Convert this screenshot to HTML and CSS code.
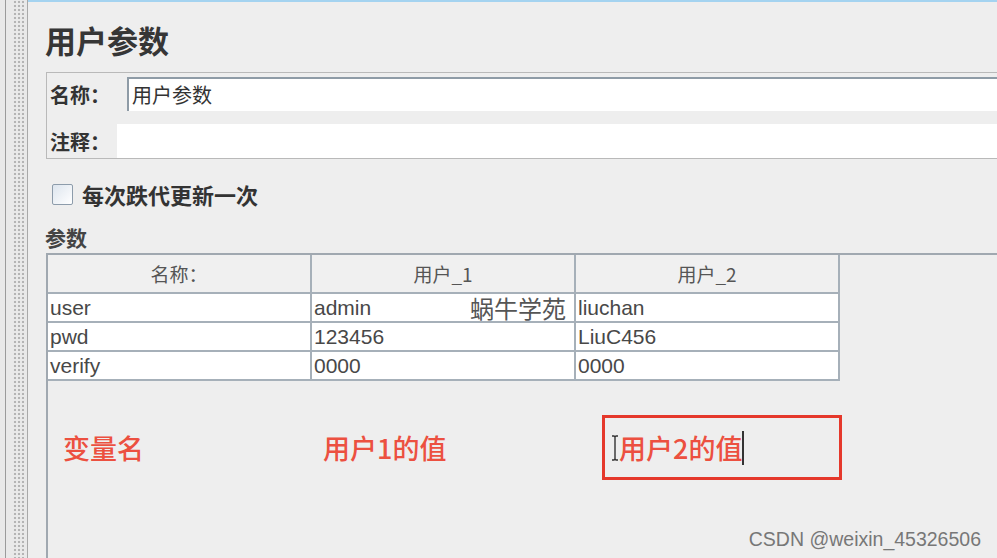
FILE: index.html
```html
<!DOCTYPE html>
<html lang="zh-CN">
<head>
    <meta charset="UTF-8">
    <meta name="viewport" content="width=device-width, initial-scale=1.0">
    <title>用户参数</title>
    <link rel="stylesheet" href="styles.css">
</head>
<body>
    <div class="window">
        <div class="splitter">
            <div class="splitter-edge"></div>
            <div class="splitter-grip"></div>
            <div class="splitter-line"></div>
        </div>

        <main class="panel">
            <h1 class="title">用户参数</h1>

            <div class="name-box">
                <div class="field-row">
                    <label class="field-label name-label">名称：</label>
                    <div class="field-input inset">用户参数</div>
                </div>
                <div class="field-row">
                    <label class="field-label comment-label">注释：</label>
                    <div class="field-input"></div>
                </div>
            </div>

            <div class="check-row">
                <span class="checkbox"></span>
                <span class="check-label">每次跌代更新一次</span>
            </div>

            <div class="section-label">参数</div>

            <div class="scroll-pane">
                <table class="params">
                    <thead>
                        <tr>
                            <th>名称：</th>
                            <th>用户_1</th>
                            <th>用户_2</th>
                        </tr>
                    </thead>
                    <tbody>
                        <tr>
                            <td>user</td>
                            <td>admin</td>
                            <td>liuchan</td>
                        </tr>
                        <tr>
                            <td>pwd</td>
                            <td>123456</td>
                            <td>LiuC456</td>
                        </tr>
                        <tr>
                            <td>verify</td>
                            <td>0000</td>
                            <td>0000</td>
                        </tr>
                    </tbody>
                </table>

                <!-- red notes drawn over the screen -->
                <div class="notes">
                    <span class="note note-name">变量名</span>
                    <span class="note note-user1">用户1的值</span>
                    <div class="note-box">
                        <svg class="ibeam" width="8" height="26" viewBox="0 0 8 26">
                            <path d="M1 1h2l1 1 1-1h2M4 2v22M1 25h2l1-1 1 1h2" fill="none" stroke="#333" stroke-width="1.4"/>
                        </svg>
                        <span class="note">用户2的值</span>
                        <span class="caret"></span>
                    </div>
                </div>

                <div class="watermark">蜗牛学苑</div>
            </div>
        </main>
    </div>

    <div class="csdn">CSDN @weixin_45326506</div>
</body>
</html>
```

FILE: styles.css
```css
/* Reset */
* {
    margin: 0;
    padding: 0;
    box-sizing: border-box;
}

body {
    font-family: "Noto Sans CJK SC", "Liberation Sans", sans-serif;
    background-color: #eeeeee;
    color: #333;
    width: 997px;
    height: 558px;
    overflow: hidden;
    position: relative;
}

.window {
    display: flex;
    height: 558px;
}

/* left splitter strip */
.splitter {
    width: 28px;
    flex: none;
    display: flex;
    background-color: #e9e9e9;
}

.splitter-edge {
    width: 6px;
    border-right: 1px solid #9b9b9b;
}

.splitter-grip {
    margin-left: 7px;
    width: 11px;
    background-image: radial-gradient(circle, #b4b4b4 1px, transparent 1.6px);
    background-size: 4px 4px;
}

.splitter-line {
    margin-left: 2px;
    width: 2px;
    border-right: 1px solid #a9a9a9;
}

.panel {
    flex: 1;
    min-width: 0;
    border-top: 2px solid #a4d3f0;
    padding-left: 18px;
}

.title {
    margin-top: 20px;
    height: 36px;
    line-height: 36px;
    font-size: 31px;
    font-weight: bold;
    color: #363636;
    margin-left: -1px;
}

/* name / comment box */
.name-box {
    margin-top: 14px;
    border: 1px solid #b9b9b9;
    border-right: none;
    padding-top: 4px;
    display: flex;
    flex-direction: column;
    gap: 13px;
}

.field-row {
    display: flex;
    align-items: center;
    height: 34px;
}

.field-label {
    font-size: 20px;
    font-weight: bold;
    padding-left: 3px;
    flex: none;
}

.name-label {
    width: 80px;
}

.comment-label {
    width: 70px;
}

.field-input {
    flex: 1;
    height: 34px;
    background-color: #fff;
    font-size: 20px;
    line-height: 32px;
    padding-left: 3px;
}

.field-input.inset {
    border-top: 2px solid #8e9ba6;
    border-left: 2px solid #8e9ba6;
}

/* checkbox */
.check-row {
    margin-top: 20px;
    height: 30px;
    display: flex;
    align-items: center;
    padding-left: 6px;
    gap: 9px;
}

.checkbox {
    width: 21px;
    height: 21px;
    border: 1px solid #8d9cab;
    border-radius: 2px;
    background: linear-gradient(135deg, #dde5ee, #ffffff);
}

.check-label {
    font-size: 22px;
    font-weight: bold;
    color: #333;
}

.section-label {
    margin-top: 17px;
    height: 22px;
    line-height: 22px;
    font-size: 21px;
    font-weight: bold;
    color: #444;
    margin-left: -1px;
}

/* parameters table */
.scroll-pane {
    position: relative;
    margin-top: 5px;
    height: 305px;
    border-top: 2px solid #a0a8b0;
    border-left: 2px solid #a0a8b0;
}

.params {
    border-collapse: separate;
    border-spacing: 0;
    width: 792px;
    table-layout: fixed;
}

.params th,
.params td {
    border-right: 2px solid #a6b0b9;
    border-bottom: 2px solid #a6b0b9;
}

.params th {
    height: 39px;
    font-size: 19px;
    font-weight: normal;
    color: #555;
    background-color: #f0f0f0;
}

.params td {
    height: 29px;
    font-family: "Liberation Sans", "Noto Sans CJK SC", sans-serif;
    font-size: 21px;
    color: #484848;
    background-color: #fff;
    padding-left: 2px;
    line-height: 26px;
}

/* annotations */
.notes {
    margin-top: 34px;
    padding-left: 15px;
    display: flex;
    align-items: center;
}

.note {
    font-size: 27px;
    font-weight: 500;
    color: #ec5040;
    line-height: 32px;
}

.note-name {
    width: 260px;
}

.note-user1 {
    width: 279px;
}

.note-box {
    width: 240px;
    height: 65px;
    border: 3px solid #e5382b;
    display: flex;
    align-items: center;
    padding-left: 6px;
}

.ibeam {
    flex: none;
}

.caret {
    width: 2px;
    height: 34px;
    background-color: #333;
}

.watermark {
    position: absolute;
    left: 422px;
    top: 38px;
    font-size: 24px;
    line-height: 30px;
    color: #555;
}

.csdn {
    position: absolute;
    right: 16px;
    top: 528px;
    font-family: "Liberation Sans", sans-serif;
    font-size: 19.5px;
    line-height: 22px;
    color: #777;
}
```
